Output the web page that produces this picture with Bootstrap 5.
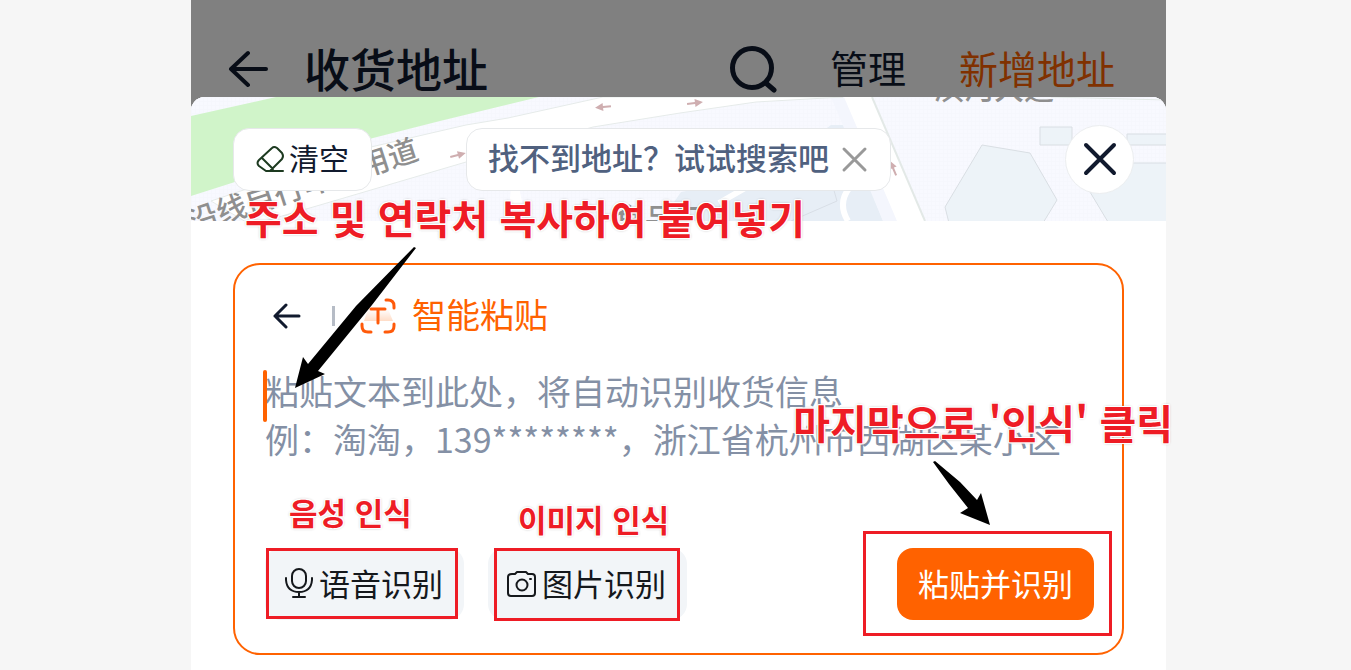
<!DOCTYPE html>
<html lang="zh-CN">
<head>
<meta charset="utf-8">
<meta name="viewport" content="width=device-width, initial-scale=1">
<title>收货地址</title>
<link href="https://cdn.jsdelivr.net/npm/bootstrap@5.3.0/dist/css/bootstrap.min.css" rel="stylesheet">
<style>
  :root { --brand: #ff6200; --ink: #111a2e; --note: #ee1c25; }
  body { background: #f6f6f6; font-family: "Noto Sans CJK SC", sans-serif; color: var(--ink); overflow-x: hidden; }
  button { font-family: inherit; color: inherit; }
  svg { display: block; flex: none; }
  .phone { margin: 0 185px 0 191px; background: #808080; }
  .top-bar { padding: 42px 51px 0 37px; height: 97px; color: #080d17; line-height: 52px; }
  .top-bar h1 { font-size: 46px; line-height: 52px; font-weight: 500; margin-left: 34px; }
  .top-bar h1, .bar-link { padding-bottom: 5px; }
  .bar-link { font-size: 38px; color: #080d17; text-decoration: none; margin-left: 53px; }
  .bar-link.add { color: #803100; font-size: 39px; }
  .sheet { background: #fff; border-radius: 14px 14px 0 0; min-height: 573px; }
  .map-strip { height: 124px; padding: 28px 32px 0 42px; border-radius: 14px 14px 0 0; overflow: hidden; background: #f8f9ff; }
  .map-art { position: absolute; inset: 0; width: 100%; height: 100%; }
  .map-pill { background: #fff; border: 1px solid #e6e8ea; border-radius: 16px; height: 63px; margin-top: 3px; }
  .map-pill a, .map-pill span { padding-bottom: 5px; }
  .clear-btn { font-size: 30px; line-height: 36px; width: 139px; padding: 0 0 0 21px; gap: 3px; }
  .search-tip { font-size: 31px; line-height: 36px; font-weight: 500; color: #50617f; margin-left: 94px; padding: 0 21px; gap: 10px; }
  .search-tip a { color: inherit; text-decoration: none; }
  .close-btn { width: 69px; height: 69px; border: 1px solid #eceef0; background: #fff; }
  .sheet-body { padding: 42px 42px 15px; }
  .paste-card { border: 2px solid var(--brand); border-radius: 27px; padding: 26px 28px 33px 30px; }
  .paste-head { height: 50px; color: var(--brand); font-size: 34px; line-height: 46px; }
  .paste-head label { padding-bottom: 4px; }
  .divider { width: 3px; height: 20px; background: #b6bcc6; margin-left: 29px; margin-right: 25px; }
  .paste-area { margin-top: 26px; }
  .paste-text { height: 96px; border: 0; padding: 0; font-size: 34px; line-height: 48px; resize: none; overflow: hidden; background: transparent; outline: 0; color: var(--ink); }
  .paste-text::placeholder { color: #8490a5; opacity: 1; }
  .caret { position: absolute; left: -2px; top: 3px; width: 4px; height: 52px; border-radius: 2px; background: var(--brand); }
  .actions { margin-top: 85px; }
  .soft-btn, .submit-btn { height: 72px; border: 0; border-radius: 16px; font-size: 31px; line-height: 40px; padding-bottom: 4px; }
  .soft-btn { background: #f2f5f8; color: #15181c; width: 199px; padding: 0 0 2px 18px; }
  .submit-btn { background: var(--brand); color: #fff; width: 197px; }
  .frame { position: absolute; border: 3px solid var(--note); pointer-events: none; }
  .frame.voice { inset: 0 6px 1px 1px; }
  .frame.photo { inset: 0 7px -1px 6px; }
  .frame.submit { inset: -17px -18px -16px -34px; }
  .note { position: absolute; font-family: "Noto Sans CJK KR", sans-serif; font-weight: 700; color: var(--note); white-space: nowrap; pointer-events: none;
    text-shadow: 1px 0 #fff, -1px 0 #fff, 0 1px #fff, 0 -1px #fff, 1px 1px #fff, -1px 1px #fff, 1px -1px #fff, -1px -1px #fff, 0 0 3px #888; }
  .note.big { font-size: 40px; line-height: 56px; }
  .note.small-note { font-size: 31px; line-height: 44px; }
  .note.copy { left: 54px; top: -32px; }
  .note.voice { left: 24px; top: -58px; }
  .note.photo { left: 30px; top: -51px; }
  .note.final { right: -79px; top: -154px; }
  .arrow-copy { position: absolute; left: 103px; top: 25px; }
  .arrow-final { position: absolute; left: 35px; top: -88px; }
</style>
</head>
<body>
<main class="phone">
  <header class="top-bar d-flex align-items-center">
    <button type="button" class="btn p-0 border-0" aria-label="返回">
      <svg width="42" height="40" viewBox="0 0 42 40" fill="none" stroke="#080d17" stroke-width="4" stroke-linecap="round" stroke-linejoin="round"><path d="M20 3 3 19l17 16M3 19h35"/></svg>
    </button>
    <h1 class="mb-0">收货地址</h1>
    <button type="button" class="btn p-0 border-0 ms-auto" aria-label="搜索">
      <svg width="48" height="48" viewBox="0 0 48 48" fill="none" stroke="#080d17" stroke-width="5" stroke-linecap="round"><circle cx="23" cy="22" r="19.500"/><path d="m38 38 7 6"/></svg>
    </button>
    <a href="#" class="bar-link">管理</a>
    <a href="#" class="bar-link add">新增地址</a>
  </header>

  <section class="sheet">
    <div class="map-strip position-relative">
      <svg class="map-art" viewBox="0 0 975 124" preserveAspectRatio="xMidYMid slice" aria-hidden="true">
        <defs>
          <pattern id="grid" width="4" height="4" patternUnits="userSpaceOnUse"><path d="M0 0H4M0 0V4" stroke="#f4f6fc" fill="none"/></pattern>
          <path id="dir" d="M-8-1H0V-4L8 0 0 4V1H-8Z" fill="#cfaeb0"/>
        </defs>
        <path fill="#f8f9ff" d="M0 0H975V124H0Z"/>
        <path fill="url(#grid)" d="M0 0H975V124H0Z"/>
        <path fill="#d0f4c9" d="M0 19 85 0H348L249 24 182 41 0 99Z"/>
        <path fill="#e7eef6" d="M470 124 490 95 570 80 640 28H654L692 124Z"/>
        <path fill="#f4f6fd" d="M640 0H660L706 124H692Z"/>
        <path fill="#fff" stroke="#e6ebea" d="M60 128 129 108 275 65 402 30 489 16 565 5 652 0H412L317 21 275 28 180 50 20 104Z"/>
        <path fill="#fff" d="M653 0H681L734 124H706ZM317 124 320 90H328L335 124Z"/>
        <path fill="none" stroke="#e3e9e7" stroke-width="2" d="M681 0 734 124"/>
        <path fill="none" stroke="#fff" stroke-width="6" d="M659 90Q646 106 657 124M556 90 528 106"/>
        <path fill="none" stroke="#d8dee6" d="M642 90 646 104 600 124"/>
        <g fill="#edf3f8" stroke="#d9dee3">
          <path d="M791 48 839 56 866 103 852 126H758L754 110ZM849 30H881V48H849ZM936 37H980V48H936ZM896 66H980V130H920L890 80Z"/>
        </g>
        <path d="M860 0 975 3" stroke="#e3e9e7"/>
        <use href="#dir" transform="translate(412 10) rotate(174)"/>
        <use href="#dir" transform="translate(504 6) rotate(-7)"/>
        <use href="#dir" transform="translate(267 58) rotate(-15)"/>
        <use href="#dir" transform="translate(702 71) rotate(-113)"/>
        <g fill="#8f8f8f" font-size="30" font-weight="500" font-family="Noto Sans CJK SC, sans-serif">
          <text transform="translate(1 136) rotate(-18)">沿线自行车专用道</text>
          <text x="743" y="2">滨河大道</text>
          <text x="423" y="133">食品厂</text>
        </g>
      </svg>
      <div class="position-relative d-flex align-items-start">
        <button type="button" class="map-pill clear-btn d-flex align-items-center">
          <svg width="31" height="31" viewBox="0 0 31 31" fill="none" stroke="#1d3a20" stroke-width="2" stroke-linejoin="round" stroke-linecap="round"><path d="M11 27 4 22Q1 19 4 16L17 4Q19 2 22 4L27 9Q29 12 27 15L15 27ZM7 14 18 25M11 27H28"/></svg>
          <span>清空</span>
        </button>
        <div class="map-pill search-tip d-flex align-items-center">
          <a href="#">找不到地址？试试搜索吧</a>
          <button type="button" class="btn p-0 border-0" aria-label="关闭提示">
            <svg width="30" height="30" viewBox="0 0 30 30" fill="none" stroke="#999" stroke-width="3" stroke-linecap="round"><path d="m5 4 21 21M26 4 5 25"/></svg>
          </button>
        </div>
        <button type="button" class="close-btn rounded-circle p-0 ms-auto d-flex align-items-center justify-content-center" aria-label="关闭">
          <svg width="36" height="36" viewBox="0 0 36 36" fill="none" stroke="#111a2e" stroke-width="4" stroke-linecap="round"><path d="m4 3 28 28M32 3 4 31"/></svg>
        </button>
      </div>
    </div>

    <div class="sheet-body position-relative">
      <form class="paste-card">
        <div class="paste-head d-flex align-items-center">
          <button type="button" class="btn p-0 border-0 ms-2" aria-label="返回">
            <svg width="30" height="28" viewBox="0 0 30 28" fill="none" stroke="#111a2e" stroke-width="3" stroke-linecap="round" stroke-linejoin="round"><path d="M13 3 2 14l11 11M2 14h24"/></svg>
          </button>
          <span class="divider"></span>
          <svg width="36" height="36" viewBox="0 0 36 36" fill="none" stroke="#ff5a0a" stroke-width="3" stroke-linecap="round">
            <defs><linearGradient id="glow" x2="0" y2="1"><stop stop-color="#ff6200" stop-opacity="0"/><stop offset="1" stop-color="#ff6200" stop-opacity=".22"/></linearGradient></defs>
            <path d="M4 23 8 11H28L33 23Z" fill="url(#glow)" stroke="none"/>
            <path d="M2 11V8Q2 2 8 2H10M26 2H28Q34 2 34 8V10M34 26V28Q34 34 28 34H25M11 34H8Q2 34 2 28V26"/>
            <path d="M11 11H25M18 11V25"/>
          </svg>
          <label for="address" class="ms-3">智能粘贴</label>
        </div>
        <div class="paste-area position-relative">
          <textarea id="address" class="paste-text d-block w-100" placeholder="粘贴文本到此处，将自动识别收货信息&#10;例：淘淘，139********，浙江省杭州市西湖区某小区"></textarea>
          <span class="caret"></span>
        </div>
        <div class="actions d-flex gap-4">
          <div class="position-relative">
            <button type="button" class="soft-btn d-flex align-items-center">
              <svg width="32" height="34" viewBox="0 0 32 34" fill="none" stroke="#15181c" stroke-width="2" stroke-linecap="round"><rect x="9" y="3" width="14" height="19" rx="7"/><path d="M3 12V14Q4 26 16 26T29 14V12M16 26V31M10 31H22"/></svg>
              <span class="ms-1">语音识别</span>
            </button>
            <span class="frame voice"></span>
            <span class="note small-note voice" lang="ko">음성 인식</span>
          </div>
          <div class="position-relative">
            <button type="button" class="soft-btn d-flex align-items-center">
              <svg width="32" height="34" viewBox="0 0 32 34" fill="none" stroke="#15181c" stroke-width="2" stroke-linecap="round" stroke-linejoin="round"><path d="M6 8H9L11 6H20L22 8H26Q29 8 29 11V27Q29 30 26 30H5Q2 30 2 27V11Q2 8 6 8Z"/><circle cx="16" cy="19" r="5.500"/><path d="M24 13H25"/></svg>
              <span class="ms-1">图片识别</span>
            </button>
            <span class="frame photo"></span>
            <span class="note small-note photo" lang="ko">이미지 인식</span>
          </div>
          <div class="position-relative ms-auto">
            <button type="submit" class="submit-btn">粘贴并识别</button>
            <span class="frame submit"></span>
            <svg class="arrow-final" width="62" height="68" viewBox="0 0 62 68" aria-hidden="true"><path d="M1 2 3 1 28 22 45 40 49 33 58 65 28 53 36 48 17 24Z"/></svg>
            <span class="note big final" lang="ko">마지막으로 '인식' 클릭</span>
          </div>
        </div>
      </form>
      <span class="note big copy" lang="ko">주소 및 연락처 복사하여 붙여넣기</span>
      <svg class="arrow-copy" width="124" height="144" viewBox="0 0 124 144" aria-hidden="true"><path d="M120 1 122 2 78 59 24 125 31 128 1 142 9 111 14 118 62 60Z"/></svg>
    </div>
  </section>
</main>
<script src="https://cdn.jsdelivr.net/npm/bootstrap@5.3.0/dist/js/bootstrap.bundle.min.js"></script>
</body>
</html>
